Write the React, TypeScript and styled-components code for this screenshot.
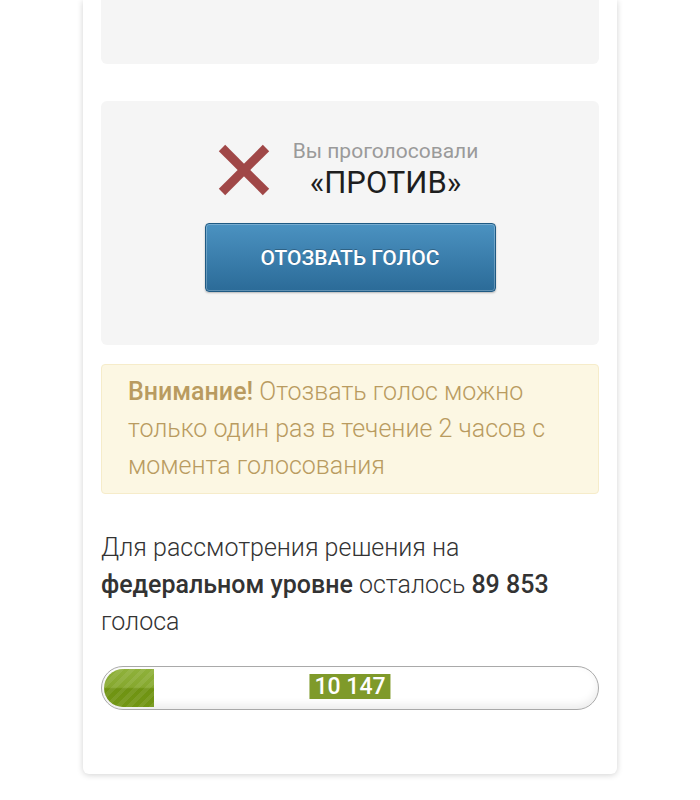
import styled, {createGlobalStyle} from 'styled-components';

const GlobalStyle = createGlobalStyle`
  body {
    margin: 0;
    background: #fff;
    font-family: Roboto, "Noto Sans", sans-serif;
  }
`;

const Page = styled.div`
  width: 700px;
  height: 800px;
  overflow: hidden;
`;

const Card = styled.div`
  width: 534px;
  margin: 0 auto 0 83px;
  padding: 0 18px 64px;
  box-sizing: border-box;
  background: #fff;
  border-radius: 0 0 6px 6px;
  box-shadow: 0 1px 6px rgba(0, 0, 0, 0.18);
  display: flex;
  flex-direction: column;
`;

const GrayBox = styled.div<{$top?: boolean}>`
  background: #f5f5f5;
  border-radius: ${p => (p.$top ? '0 0 6px 6px' : '6px')};
`;

const TopBox = styled(GrayBox)`
  height: 64px;
`;

const VoteBox = styled(GrayBox)`
  margin-top: 37px;
  padding: 37px 0 53px;
  display: flex;
  flex-direction: column;
  align-items: center;
`;

const VoteRow = styled.div`
  display: flex;
  align-items: center;
  gap: 23px;
  margin-left: -4px;
`;

const VoteText = styled.div`
  text-align: center;
`;

const VoteCaption = styled.div`
  font-size: 21px;
  color: #9a9a9a;
  line-height: 27px;
`;

const VoteValue = styled.div`
  font-size: 31px;
  color: #1e1e1e;
  line-height: 36px;
`;

const RecallButton = styled.button`
  margin-top: 22px;
  width: 291px;
  height: 69px;
  border: 1px solid #1f5a83;
  border-radius: 4px;
  background: linear-gradient(#4b92c1, #2b6b98);
  box-shadow: inset 0 0 0 1px rgba(255, 255, 255, 0.25), 0 1px 2px rgba(0, 0, 0, 0.25);
  color: #fff;
  font-family: Roboto, sans-serif;
  font-weight: 500;
  font-size: 21px;
  text-shadow: 0 -1px 0 rgba(0, 0, 0, 0.25);
`;

const Alert = styled.div`
  margin-top: 19px;
  padding: 8px 20px 9px 26px;
  background: #fcf7e3;
  border: 1px solid #f6ecca;
  border-radius: 4px;
  color: #b99b60;
  font-size: 25px;
  font-weight: 300;
  line-height: 37px;

  b {
    font-weight: 500;
  }
`;

const Remaining = styled.p`
  margin: 35px 0 0;
  color: #333;
  font-size: 25px;
  font-weight: 300;
  line-height: 37px;

  b {
    font-weight: 500;
  }
`;

const Progress = styled.div`
  margin-top: 26px;
  height: 44px;
  box-sizing: border-box;
  border: 1px solid #a9a9a9;
  border-radius: 22px;
  padding: 2px;
  background: #fff;
  box-shadow: inset 0 -4px 8px rgba(0, 0, 0, 0.08);
  position: relative;
  display: flex;
`;

const Fill = styled.div`
  height: 100%;
  border-radius: 19px 0 0 19px;
  background:
    repeating-linear-gradient(
      -45deg,
      rgba(255, 255, 255, 0.08) 0 4px,
      rgba(0, 0, 0, 0) 4px 8px
    ),
    linear-gradient(#8fb13a 0%, #86a82e 48%, #6f9312 52%, #729614 100%);
`;

const Count = styled.span`
  position: absolute;
  left: 50%;
  top: 7px;
  transform: translateX(-50%);
  background: #7f9a2a;
  color: #fff;
  font-size: 23px;
  font-weight: 500;
  line-height: 25px;
  padding: 0 5px;
`;

const CrossIcon = () => (
  <svg width="52" height="52" viewBox="0 0 52 52">
    <g stroke="#a04747" strokeWidth="9">
      <line x1="4" y1="4" x2="48" y2="48" />
      <line x1="48" y1="4" x2="4" y2="48" />
    </g>
  </svg>
);

const total = 100000;
const collected = 10147;

export default function App() {
  return (
    <Page>
      <GlobalStyle />
      <Card>
        <TopBox $top />
        <VoteBox>
          <VoteRow>
            <CrossIcon />
            <VoteText>
              <VoteCaption>Вы проголосовали</VoteCaption>
              <VoteValue>«ПРОТИВ»</VoteValue>
            </VoteText>
          </VoteRow>
          <RecallButton>ОТОЗВАТЬ ГОЛОС</RecallButton>
        </VoteBox>
        <Alert>
          <b>Внимание!</b> Отозвать голос можно только один раз в течение 2 часов с момента голосования
        </Alert>
        <Remaining>
          Для рассмотрения решения на <b>федеральном уровне</b> осталось <b>89 853</b> голоса
        </Remaining>
        <Progress>
          <Fill style={{width: `${(collected / total) * 100}%`}} />
          <Count>10 147</Count>
        </Progress>
      </Card>
    </Page>
  );
}
